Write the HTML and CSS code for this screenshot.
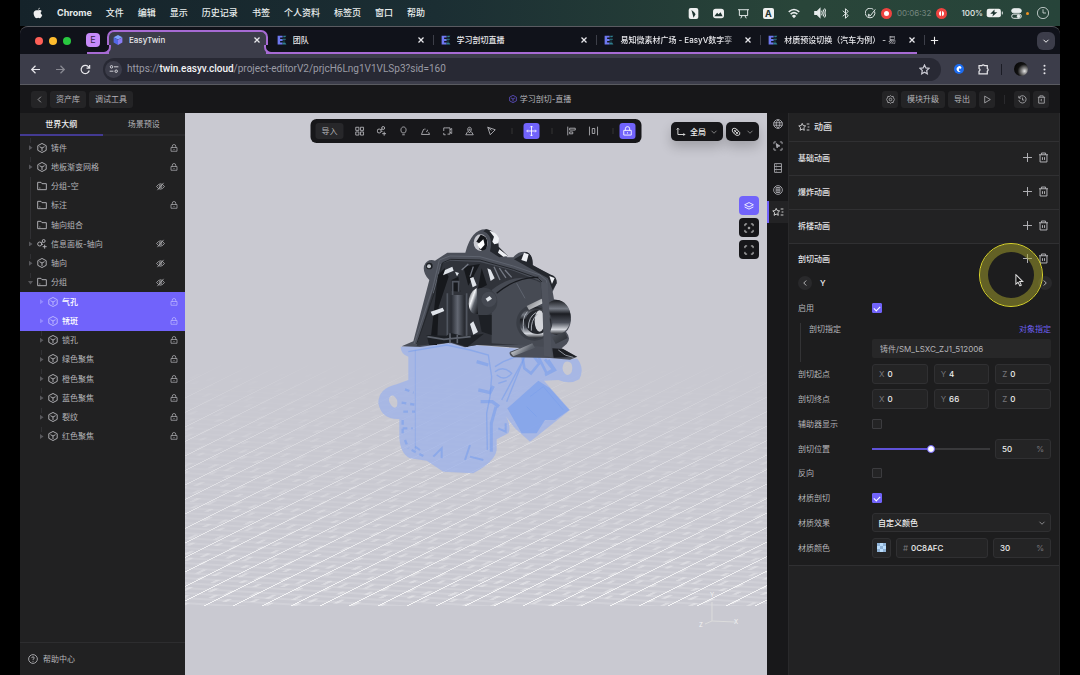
FILE: index.html
```html
<!DOCTYPE html>
<html lang="zh-CN">
<head>
<meta charset="utf-8">
<title>EasyTwin</title>
<link rel="stylesheet" href="styles.css">
</head>
<body>
<svg class="sprite" aria-hidden="true">
  <symbol id="cube" viewBox="0.5 0.5 15 15"><path d="M8 1.200 14.300 4.500v7L8 14.800 1.700 11.500v-7zM4.200 6 8 8l3.800-2M8 8v4.500"/></symbol>
  <symbol id="folder" viewBox="0.5 0.5 15 15"><path d="M1.500 2.500h5l1.500 2h6.500v9h-13zM4 11h1.500"/></symbol>
  <symbol id="nodes" viewBox="0.5 0.5 15 15"><circle cx="4.500" cy="8" r="3"/><circle cx="10.500" cy="3.500" r="2.200"/><path d="M7.500 8.500h2M12 9v6M9 12h6M7 6l2-1"/></symbol>
  <symbol id="lock" viewBox="0 0 16 16"><path d="M2 7h12v7.500H2zM4.500 7V4.500a3.500 3.500 0 0 1 7 0V7M8 10v2"/></symbol>
  <symbol id="eye-off" viewBox="0 0 16 16"><path d="M1 8q7-9.500 14 0-7 9.500-14 0zM13.500 1.500l-11 13"/><circle cx="8" cy="8" r="2.300"/></symbol>
  <symbol id="plus" viewBox="0 0 16 16"><path d="M8 1.500v13M1.500 8h13"/></symbol>
  <symbol id="close" viewBox="0 0 16 16"><path d="m3 3 10 10M13 3 3 13"/></symbol>
  <symbol id="trash" viewBox="0 0 16 16"><path d="M1.500 4h13M5 4V1.500h6V4M3 4v10.500h10V4M6.500 7.500v4M9.500 7.500v4"/></symbol>
  <symbol id="left" viewBox="0 0 16 16"><path d="M10.500 3 5.500 8l5 5"/></symbol>
  <symbol id="right" viewBox="0 0 16 16"><path d="m5.500 3 5 5-5 5"/></symbol>
  <symbol id="down" viewBox="0 0 16 16"><path d="m3 5.500 5 5 5-5"/></symbol>
  <symbol id="arrow" viewBox="0 0 16 16"><path d="M14.500 8h-12M8 2.500 2.500 8 8 13.500"/></symbol>
  <symbol id="star" viewBox="0 0 16 16"><path d="m8 1.500 2 4.300 4.500.5-3.300 3.200.9 4.800L8 12l-4.100 2.300.9-4.800L1.500 6.300 6 5.800z"/></symbol>
  <symbol id="anim" viewBox="0 0 20 16"><path d="m7 2 1.700 3.700 4 .5-3 2.900.8 4.400L7 11.500l-3.500 2 .8-4.400-3-2.900 4-.5zM14.500 3H19M16 8h3M14.500 13H19"/></symbol>
  <symbol id="gear" viewBox="0 0 16 16"><path d="M8 1l2 1.800 2.800-.3.500 2.800L15.500 8l-2.200 2.700-.5 2.800-2.800-.3L8 15l-2-1.800-2.800.3-.5-2.800L.5 8l2.200-2.700.5-2.800 2.800.3z"/><circle cx="8" cy="8" r="2.300"/></symbol>
  <symbol id="frame" viewBox="0 0 16 16"><path d="M1.500 5V1.500H5M11 1.500h3.500V5M14.500 11v3.500H11M5 14.500H1.500V11"/></symbol>
  <symbol id="ev" viewBox="0 0 16 16"><path class="ev-a" d="M1 1h8v3H5v2.500h4v3H5V12h4v3H1z"/><path class="ev-b" d="M10 1h5l-2 2.500h-3zM9 6h5v1.500H9zM9 9h4v1H9zM9 12h4l2 3H9z"/></symbol>
</svg>

<div class="screen">
  <nav class="menubar">
    <svg class="apple" viewBox="0 0 16 18"><path d="M11 0q.2 2.500-2.700 4Q8.200 1.300 11 0zM8 4.700c1.300 0 3.800-1.700 6 .9-2.600 1.900-2 5.400.8 6.500-1.800 4.500-3.600 6-6.400 4.600-3 1.300-4.800.4-6.400-3C-.5 8.500 1.500 3.200 8 4.700z"/></svg>
    <b>Chrome</b><span>文件</span><span>编辑</span><span>显示</span><span>历史记录</span><span>书签</span><span>个人资料</span><span>标签页</span><span>窗口</span><span>帮助</span>
    <div class="status">
      <svg class="mi solid" viewBox="0 0 16 16"><rect x="1" y="0" width="14" height="16" rx="3"/><path class="cut" d="M5 3l4 3 2 3-3 5-1-4z"/></svg>
      <svg class="mi solid" viewBox="0 0 16 16"><rect x="0" y="1" width="16" height="14" rx="4"/><path class="cut" d="m2 12 4-5 2 2 3-3 3 6z"/></svg>
      <svg class="mi" viewBox="0 0 16 16"><path d="M0 2.500h16M2 2.500v8.500h12V2.500M6 11l-2 4M10 11l2 4"/></svg>
      <span class="ime">A</span>
      <svg class="mi wide" viewBox="0 0 16 16"><path class="wifi" d="M1 6.500q7-6.500 14 0M3.500 9.500q4.500-4 9 0M6.500 12q1.500-1.500 3 0l-1.500 1.500z"/></svg>
      <svg class="mi wide" viewBox="0 0 16 16"><path class="fill" d="M1 6h3l4-4v12l-4-4H1z"/><path d="M10 5q2 3 0 6M12 3.500q3 4.500 0 9M14 2q4 6 0 12"/></svg>
      <svg class="mi" viewBox="0 0 16 16"><path d="m4 4 8 7-4 4V1l4 4-8 7"/></svg>
      <div class="rec">
        <svg class="mi" viewBox="0 0 16 16"><path d="M12 2a7 7 0 1 0 2 3M5 9l3 2 7-9M5 9l0 3 3-1"/></svg>
        <i class="dot stop"></i><span>00:06:32</span><i class="dot pause"></i>
      </div>
      <div class="battery"><span>100%</span><svg viewBox="0 0 24 14"><rect x="1" y="1" width="20" height="12" rx="3"/><path class="cut" d="m12 2-6 6h4l-1 4 7-6h-4z"/><path d="M23 5v4"/></svg></div>
      <div class="cc"><svg class="mi" viewBox="0 0 16 16"><rect class="fill" x="1" y="1" width="14" height="6" rx="3"/><rect x="1" y="9" width="14" height="6" rx="3"/><circle class="fill" cx="11" cy="12" r="2"/></svg><i></i></div>
      <svg class="mi clock" viewBox="0 0 16 16"><circle cx="8" cy="8" r="7.500"/><path d="M8 3v5h4"/></svg>
    </div>
  </nav>

  <div class="browser">
    <div class="tabstrip">
      <div class="lights"><i></i><i></i><i></i></div>
      <div class="group">
        <span class="badge">E</span>
        <div class="tab active"><svg class="fav" viewBox="0 0 16 16"><path fill="#7da2ff" d="M8 0l7 3.500-7 3.500-7-3.500z"/><path fill="#5267e8" d="m1 4 7 3.500V16l-7-4z"/><path fill="#8b7df5" d="m15 4-7 3.500V16l7-4z"/></svg><span>EasyTwin</span><button aria-label="关闭"><svg><use href="#close"/></svg></button></div>
        <div class="tab"><svg class="fav"><use href="#ev"/></svg><span>团队</span><button aria-label="关闭"><svg><use href="#close"/></svg></button></div>
        <div class="tab"><svg class="fav"><use href="#ev"/></svg><span>学习剖切直播</span><button aria-label="关闭"><svg><use href="#close"/></svg></button></div>
        <div class="tab"><svg class="fav"><use href="#ev"/></svg><span class="fade">易知微素材广场 - EasyV数字孪</span><button aria-label="关闭"><svg><use href="#close"/></svg></button></div>
        <div class="tab"><svg class="fav"><use href="#ev"/></svg><span class="fade">材质预设切换（汽车为例） - 易</span><button aria-label="关闭"><svg><use href="#close"/></svg></button></div>
      </div>
      <button class="newtab" aria-label="新标签页"><svg><use href="#plus"/></svg></button>
      <button class="tablist" aria-label="搜索标签页"><svg><use href="#down"/></svg></button>
    </div>
    <div class="urlbar">
      <button aria-label="后退"><svg><use href="#arrow"/></svg></button>
      <button class="dim flip" aria-label="前进"><svg><use href="#arrow"/></svg></button>
      <button aria-label="刷新"><svg viewBox="0 0 16 16"><path d="M13.500 9.500a6 6 0 1 1-1.500-5.700L14 6M14 1.500V6H9.500"/></svg></button>
      <div class="omnibox">
        <span class="site"><svg viewBox="0 0 16 16"><circle cx="4" cy="4.500" r="2"/><path d="M8 4.500h7M1 11.500h6"/><circle cx="11.500" cy="11.500" r="2"/></svg></span>
        <a href="#">https://<b>twin.easyv.cloud</b>/project-editorV2/prjcH6Lng1V1VLSp3?sid=160</a>
        <button aria-label="收藏"><svg><use href="#star"/></svg></button>
      </div>
      <svg class="ext" viewBox="0 0 16 16"><circle cx="8" cy="8" r="8" fill="#1c6cf0" stroke="none"/><path d="M12 5a4.500 4.500 0 1 0-1 7c-3 0-4-2-3-4s2-1 3 0" fill="#fff" stroke="none"/></svg>
      <button aria-label="扩展"><svg viewBox="0 0 16 16"><path d="M1.500 2.500h4q2-2.500 4 0h4v4q2.500 1.500 0 4v4h-12v-4q3-2 0-4z"/></svg></button>
      <i class="bar"></i><span class="avatar"></span>
      <button class="dots" aria-label="菜单"><svg viewBox="0 0 16 16"><circle cx="8" cy="2.500" r="1.500"/><circle cx="8" cy="8" r="1.500"/><circle cx="8" cy="13.500" r="1.500"/></svg></button>
    </div>
  </div>

  <header class="appbar">
    <div class="side"><button class="sq" aria-label="返回"><svg><use href="#left"/></svg></button><button>资产库</button><button>调试工具</button></div>
    <h1><svg><use href="#cube"/></svg>学习剖切-直播</h1>
    <div class="side end">
      <button class="sq" aria-label="设置"><svg><use href="#gear"/></svg></button><button>模块升级</button><button>导出</button>
      <button class="sq" aria-label="预览"><svg viewBox="0 0 16 16"><path d="M3 2v12l10-6z"/></svg></button><i></i>
      <button class="sq" aria-label="历史"><svg viewBox="0 0 16 16"><path d="M2 5a6.500 6.500 0 1 1-.500 4M1.500 1.500V5.500h4M8 4.500V9h3"/></svg></button>
      <button class="sq" aria-label="回收站"><svg viewBox="0 0 16 16"><path d="M1.500 4h13M5 4V1.500h6V4M3 4v10.500h10V4M9 7 6.500 9 9 11"/></svg></button>
    </div>
  </header>

  <main class="work">
    <aside class="outline">
      <div class="tabs"><button class="on">世界大纲</button><button>场景预设</button></div>
      <ul class="tree">
        <li><i class="caret"></i><svg><use href="#cube"/></svg><span>铸件</span><svg class="st"><use href="#lock"/></svg></li>
        <li><i class="caret"></i><svg><use href="#cube"/></svg><span>地板渐变网格</span><svg class="st"><use href="#lock"/></svg></li>
        <li class="leaf"><i></i><svg><use href="#folder"/></svg><span>分组-空</span><svg class="st eye"><use href="#eye-off"/></svg></li>
        <li class="leaf"><i></i><svg><use href="#folder"/></svg><span>标注</span><svg class="st"><use href="#lock"/></svg></li>
        <li class="leaf"><i></i><svg><use href="#folder"/></svg><span>轴向组合</span></li>
        <li><i class="caret"></i><svg><use href="#nodes"/></svg><span>信息面板-轴向</span><svg class="st eye"><use href="#eye-off"/></svg></li>
        <li><i class="caret"></i><svg><use href="#cube"/></svg><span>轴向</span><svg class="st eye"><use href="#eye-off"/></svg></li>
        <li class="open"><i class="caret"></i><svg><use href="#folder"/></svg><span>分组</span><svg class="st eye"><use href="#eye-off"/></svg></li>
        <li class="child sel"><i class="caret"></i><svg><use href="#cube"/></svg><span>气孔</span><svg class="st"><use href="#lock"/></svg></li>
        <li class="child sel"><i class="caret"></i><svg><use href="#cube"/></svg><span>锈斑</span><svg class="st"><use href="#lock"/></svg></li>
        <li class="child"><i class="caret"></i><svg><use href="#cube"/></svg><span>锁孔</span><svg class="st"><use href="#lock"/></svg></li>
        <li class="child"><i class="caret"></i><svg><use href="#cube"/></svg><span>绿色聚焦</span><svg class="st"><use href="#lock"/></svg></li>
        <li class="child"><i class="caret"></i><svg><use href="#cube"/></svg><span>橙色聚焦</span><svg class="st"><use href="#lock"/></svg></li>
        <li class="child"><i class="caret"></i><svg><use href="#cube"/></svg><span>蓝色聚焦</span><svg class="st"><use href="#lock"/></svg></li>
        <li class="child"><i class="caret"></i><svg><use href="#cube"/></svg><span>裂纹</span><svg class="st"><use href="#lock"/></svg></li>
        <li class="child"><i class="caret"></i><svg><use href="#cube"/></svg><span>红色聚焦</span><svg class="st"><use href="#lock"/></svg></li>
      </ul>
      <a class="help" href="#"><svg viewBox="0 0 16 16"><circle cx="8" cy="8" r="7"/><path d="M6 6.500q0-2 2-2t2 2q0 1-2 2v1M8 11v1.500"/></svg>帮助中心</a>
    </aside>

    <section class="viewport">
      <svg class="scene" viewBox="185 113 582 562" preserveAspectRatio="xMidYMid slice">
        <defs>
          <linearGradient id="fadeg" x1="0" y1="0" x2="0" y2="1"><stop offset="0" stop-color="#000"/><stop offset=".35" stop-color="#555"/><stop offset="1" stop-color="#eee"/></linearGradient>
          <mask id="fade"><rect x="185" y="360" width="582" height="246" fill="url(#fadeg)"/></mask>
          <pattern id="diag" width="29" height="40" patternUnits="userSpaceOnUse" patternTransform="matrix(1 0 -2 1 10 0)"><path d="M14 0V40" stroke="#fff" stroke-width="2" opacity=".85"/></pattern>
          <pattern id="flat" width="60" height="5" patternUnits="userSpaceOnUse" patternTransform="matrix(1 .06 0 1 0 0)"><path d="M0 2H60" stroke="#fff" stroke-width="1" opacity=".34"/></pattern>
          <pattern id="dash" width="42" height="15" patternUnits="userSpaceOnUse" patternTransform="matrix(1 .09 -2 1 0 0)"><path d="M5 2v4M16 8v3M23 3v4M34 10v3" stroke="#fff" stroke-width="4" opacity=".36"/></pattern>
          <linearGradient id="metal" x1="0" y1="0" x2="1" y2="1"><stop offset="0" stop-color="#24272d"/><stop offset=".4" stop-color="#f4f6f9"/><stop offset=".6" stop-color="#5b6069"/><stop offset="1" stop-color="#111317"/></linearGradient>
          <linearGradient id="barrel" x1="0" y1="0" x2="0" y2="1"><stop offset="0" stop-color="#1a1c21"/><stop offset=".25" stop-color="#757a84"/><stop offset=".4" stop-color="#1c1e23"/><stop offset=".65" stop-color="#4b4f59"/><stop offset=".85" stop-color="#d5d8de"/><stop offset="1" stop-color="#1c1e23"/></linearGradient>
          <linearGradient id="tube" x1="0" y1="0" x2="1" y2="0"><stop offset="0" stop-color="#24272e"/><stop offset=".5" stop-color="#636873"/><stop offset="1" stop-color="#25282e"/></linearGradient>
        </defs>
        <g mask="url(#fade)">
          <rect x="185" y="360" width="582" height="246" fill="url(#flat)"/>
          <rect x="185" y="360" width="582" height="246" fill="url(#dash)"/>
          <rect x="185" y="360" width="582" height="246" fill="url(#diag)"/>
        </g>
        <g transform="translate(370 220) scale(.3333)">
          <path fill="#9fb3e8" fill-opacity=".8" fill-rule="evenodd" d="M92 380 240 368 320 376 450 386 540 414 622 416Q645 445 628 478 600 495 565 480L522 482 600 570 480 665 435 625 408 590Q425 620 415 640L380 658V690Q375 725 310 760L220 755 170 722 120 715Q90 700 88 650V597Q35 600 25 550 25 505 80 493L115 480V410Q92 402 92 380zM60 530q-8 10 3 25 12 15 18 3 4-18-6-27-8-8-15-1zM583 428q-12 18 2 33 12 10 20-5 6-24-7-30-8-4-15 2z"/>
          <path fill="#7ba0ec" fill-opacity=".7" d="M412 565 505 482 540 505 598 570 555 600 525 600 500 640 455 640z"/>
          <g fill="none" stroke="#6f9aed" stroke-opacity=".5" stroke-width="4">
            <path d="M136 390V690" stroke-width="2"/>
            <path d="M105 508l26 10M95 548l38 6M100 575h35M98 600v50M98 625h30M105 660l10 25M125 690l35 18" stroke-width="7" stroke-dasharray="14 12"/>
            <path d="M115 395 230 375 300 390 355 405 365 470 360 530 350 580 352 690"/>
            <path d="M378 560l-14 50v85" stroke-width="9"/>
            <path d="M320 425l35 10M325 510l35 8 10-20M332 545h35l20 15" stroke-width="10"/>
            <path d="M375 440 400 425 450 405M375 455q25-20 50 5-20 25-45 5M385 490l25-8M395 540l70-130M410 545l50-125"/>
            <path d="M455 395l8 50 20 15 25-30-20-25M500 400l30 60 20-12-25-30M535 420l20 30-30 15" stroke-width="8"/>
            <path d="M190 710l25-25v30M285 720l15-45M300 710l40 10M385 625l22 10v-25M150 690l-15-10" stroke-width="6"/>
            <path d="M470 560 500 590M480 530l40-30 60 70" stroke-width="2"/>
          </g>
          <path fill="#4b4f59" d="M95 379 130 364 178 180Q158 160 162 138 172 115 195 122L232 98 286 98Q305 25 350 28 386 40 385 85L412 112 430 112Q445 92 470 96 488 105 488 135L540 165Q560 168 560 190L548 215 552 238Q602 245 603 300 600 325 588 335 605 355 590 372L575 385 622 410 600 419 540 414 430 412Q415 405 420 395L450 384 320 375 285 382 240 368 150 381z"/>
          <path fill="#24272d" d="M348 28q36 4 38 52l28 28-26 4-28-18q12-48-20-60zM470 96q20 8 18 40l55 28q18 4 17 26l-12 20-14-35-62-35-40-22z"/>
          <path fill="#eef0f4" d="m358 32 14 18-5 15 6 8 12-3 2-15q-8-20-29-23zM388 88l26 20-14 2-16-12zM462 98l14 5-6 22-16-5zM538 168l16 6-8 18z"/>
          <ellipse cx="332" cy="68" rx="21" ry="25" fill="#c9cad1"/><path d="M332 44q20 3 20 25t-15 23l-10-5 12-12-20-10z" fill="#121418"/><path d="m322 74 18-16 4 16-12 14z" fill="#fff"/>
          <path fill="#30333a" d="M212 132 240 122 330 126 430 152 512 184 522 375 320 375 285 380 240 366 140 378z"/>
          <path fill="#464a53" d="M365 210Q440 150 512 188L520 300 522 380 365 370z"/>
          <path fill="none" stroke="#5e636e" stroke-width="3" d="M132 372 188 205 208 120 240 108 330 110 430 138 510 165 530 182 542 410M212 132 190 220M440 190l25 45"/>
          <path fill="none" stroke="#23262b" stroke-width="3" d="M140 372 198 205 218 128 242 118 330 120 430 148 505 175 520 190 530 390"/>
          <path fill="#16181c" d="m180 375 24-210 20-20 12 25-30 90-5 115zM245 180l20-10 6 45-26-2zM280 140l50-8-35 65zM335 145l16 50-28 15z"/>
          <path fill="#dfe3e9" d="m225 150 22-10 4 12-32 14zM300 175l10-4 10 25-12 6zM352 145l10 4 12 26-12 8zM300 312l10-8 14 32-14 8zM182 275l36-12 5 10-35 14zM255 155l12 4-6 10z"/>
          <g stroke="#747984" stroke-width="4"><path d="m372 140 18 40M388 144l20 30M405 150l20 22M275 150l20-18M310 140l-10 30"/></g>
          <path fill="url(#tube)" d="M242 225h42v130h-42z"/><path d="M232 220v140M290 220v130M248 225v-40h18v30" fill="none" stroke="#50555f" stroke-width="5"/>
          <ellipse cx="340" cy="245" rx="42" ry="42" fill="#3b3f47"/><path d="M320 204q-26 15-24 48t28 30z" fill="url(#metal)"/><circle cx="357" cy="238" r="23" fill="#454952"/><path d="m347 236 12-8 7 8-13 9z" fill="#dfe3e8"/><path d="M380 220Q440 170 505 172" stroke="#17191e" stroke-width="4" fill="none"/>
          <path d="M325 285h40v60l-30-10zM170 345l60 2 12-8 40 10 60-8-50 40-45-14-70 8z" fill="#1d2025"/><path d="m172 350 50 8 80-8M240 340v30M262 345v25" stroke="#5c616b" stroke-width="5" fill="none"/>
          <ellipse cx="560" cy="292" rx="42" ry="52" fill="url(#barrel)"/><circle cx="493" cy="308" r="54" fill="#393d45"/><circle cx="496" cy="308" r="47" fill="url(#barrel)"/><circle cx="502" cy="306" r="36" fill="#24272d"/><ellipse cx="509" cy="303" rx="15" ry="32" fill="#d3d5da"/><path d="M475 325q0-35 24-48M484 332q-2-30 18-50M462 335q-8-40 10-60" stroke="#a8adb5" stroke-width="3" fill="none"/>
          <path d="m470 258 45-22 4 14-42 20zM545 350l40-14 8 18-36 18zM422 398l65-28 8 13-65 26z" fill="url(#metal)"/>
          <path d="m515 185 18 4 13 222-24-4z" fill="#50545e"/><path d="m547 385 32 2 42 24-70 2z" fill="#1d1f24"/><path d="M565 390q20 20 45 22" stroke="#8f949c" stroke-width="3" fill="none"/>
          <circle cx="178" cy="138" r="10" fill="#1d2025"/><circle cx="177" cy="139" r="6" fill="#c6cad1"/>
        </g>
        <g class="axis"><path d="M712 602v19l23 1M712 621l-7 3"/><text x="710" y="597">Y</text><text x="734" y="624">X</text><text x="699" y="627">Z</text></g>
      </svg>

      <div class="tools">
        <button class="import">导入</button>
        <button aria-label="组件"><svg viewBox="0 0 16 16"><path d="M2 2h5v5H2zM9.500 2h5v5h-5zM2 9.500h5v5H2zM9.500 9.500h5v5h-5z"/></svg></button>
        <button aria-label="节点"><svg><use href="#nodes"/></svg></button>
        <button aria-label="灯光"><svg viewBox="0 0 16 16"><path d="M6 11C2.500 8 3.500 1.500 8 1.500S13.500 8 10 11zM6 14h4"/></svg></button>
        <button aria-label="地形"><svg viewBox="0 0 16 16"><path d="m5 5-3.500 8.500h13L13 10M6 5h2M9 9h2M11 6v2"/></svg></button>
        <button aria-label="相机"><svg viewBox="0 0 16 16"><path d="M5 3h7v10H8M12 6l3-2v8l-3-2M2 8V3h3M2 11v3h3"/></svg></button>
        <button aria-label="位置"><svg viewBox="0 0 16 16"><path d="M5 9 2 14h12l-3-5"/><path d="M8 11C4 7 4.500 2 8 2s4 5 0 9z"/><circle cx="8" cy="6" r="1"/></svg></button>
        <button aria-label="绘制"><svg viewBox="0 0 16 16"><path d="m2 2 12 4-8 8zM2 2l6 5"/></svg></button>
        <i></i>
        <button class="on" aria-label="移动"><svg viewBox="0 0 16 16"><path d="M8 0v16M0 8h16M6 2l2-2 2 2M6 14l2 2 2-2M2 6 0 8l2 2M14 6l2 2-2 2"/></svg></button>
        <i></i>
        <button aria-label="左对齐"><svg viewBox="0 0 16 16"><path d="M2 1v14M5 3.500h9v3H5zM5 9.500h5v3H5z"/></svg></button>
        <button aria-label="分布"><svg viewBox="0 0 16 16"><path d="M1.500 1v14M14.500 1v14M6 4h4v8H6z"/></svg></button>
        <i class="short"></i>
        <button class="on" aria-label="锁定"><svg><use href="#lock"/></svg></button>
      </div>
      <div class="modes">
        <button><svg viewBox="0 0 16 16"><path d="M3 2v10h11M1 4l2-2 2 2M12 10l2 2-2 2"/></svg>全局<svg><use href="#down"/></svg></button>
        <button aria-label="吸附"><svg viewBox="0 0 16 16"><path d="M3 8.500 2 5q0-3 3-3l3.500 1L14 9q1 4-3 4.500L8 13zM5 5l6 6M9 4 5 9M12 7l-4 4"/></svg><svg><use href="#down"/></svg></button>
      </div>
      <div class="stack">
        <button class="on" aria-label="图层"><svg viewBox="0 0 16 16"><path d="m8 2.500 7 3.500-7 3.500L1 6zM1 9.500 8 13l7-3.500"/></svg></button>
        <button aria-label="聚焦"><svg viewBox="0 0 16 16"><use href="#frame"/><path d="M8 6v4M6 8h4"/></svg></button>
        <button aria-label="全屏"><svg><use href="#frame"/></svg></button>
      </div>
    </section>

    <nav class="rail">
      <button aria-label="世界"><svg viewBox="0 0 16 16"><circle cx="8" cy="8" r="7"/><path d="M1 6h14M1 10h14M8 1Q2 8 8 15M8 1q6 7 0 14"/></svg></button>
      <button aria-label="选择"><svg viewBox="0 0 16 16"><use href="#frame"/><path class="fill" d="m5 4 6 4-3 .5L6.500 11z"/></svg></button>
      <button aria-label="数据"><svg viewBox="0 0 16 16"><path d="M2.500 1h11v14h-11zM2.500 5.500h11M2.500 10.500h11M5 3.200h1M5 8h1M5 13h1"/></svg></button>
      <button aria-label="材质"><svg viewBox="0 0 16 16"><circle cx="8" cy="8" r="7"/><path d="M5 4h6v8H5zM5 8h6M8 4v8"/></svg></button>
      <button class="on" aria-label="动画"><svg><use href="#anim"/></svg></button>
    </nav>

    <aside class="props">
      <h2><svg><use href="#anim"/></svg>动画</h2>
      <div class="sec"><h3>基础动画</h3><button aria-label="添加"><svg><use href="#plus"/></svg></button><button aria-label="删除"><svg><use href="#trash"/></svg></button></div>
      <div class="sec"><h3>爆炸动画</h3><button aria-label="添加"><svg><use href="#plus"/></svg></button><button aria-label="删除"><svg><use href="#trash"/></svg></button></div>
      <div class="sec"><h3>拆楼动画</h3><button aria-label="添加"><svg><use href="#plus"/></svg></button><button aria-label="删除"><svg><use href="#trash"/></svg></button></div>
      <div class="open-sec">
        <div class="sec"><h3>剖切动画</h3><button aria-label="添加"><svg><use href="#plus"/></svg></button><button aria-label="删除"><svg><use href="#trash"/></svg></button></div>
        <div class="pager"><button aria-label="上一个"><svg><use href="#left"/></svg></button><span>Y</span><button aria-label="下一个"><svg><use href="#right"/></svg></button></div>
        <div class="row"><label for="en">启用</label><input type="checkbox" id="en" checked></div>
        <div class="target">
          <div class="trow"><label for="tg">剖切指定</label><button>对象指定</button></div>
          <input id="tg" type="text" readonly value="铸件/SM_LSXC_ZJ1_512006">
        </div>
        <div class="rows">
          <div class="row"><span>剖切起点</span><div class="xyz"><label class="f">X<input value="0"></label><label class="f">Y<input value="4"></label><label class="f">Z<input value="0"></label></div></div>
          <div class="row"><span>剖切终点</span><div class="xyz"><label class="f">X<input value="0"></label><label class="f">Y<input value="66"></label><label class="f">Z<input value="0"></label></div></div>
          <div class="row"><label for="hp">辅助器显示</label><input type="checkbox" id="hp"></div>
          <div class="row"><label for="ps">剖切位置</label><div class="slide"><input id="ps" type="range" value="50" style="--v:50%"><label class="f pct"><input value="50" aria-label="剖切位置数值">%</label></div></div>
          <div class="row"><label for="rv">反向</label><input type="checkbox" id="rv"></div>
          <div class="row"><label for="mc">材质剖切</label><input type="checkbox" id="mc" checked></div>
          <div class="row"><label for="me">材质效果</label><div class="pick"><select id="me"><option>自定义颜色</option></select><svg><use href="#down"/></svg></div></div>
          <div class="row"><span>材质颜色</span><div class="color"><button class="f swatch" aria-label="颜色"><i></i></button><label class="f">#<input value="0C8AFC"></label><label class="f pct"><input value="30" aria-label="不透明度">%</label></div></div>
        </div>
      </div>
      <div class="pointer"><svg viewBox="0 0 12 18"><path d="M1 1v13l3-2.500 2.500 5 2-1-2.300-5H10.500z"/></svg></div>
    </aside>
  </main>
</div>
</body>
</html>
```

FILE: styles.css
```css
:root { --accent: #7163fb; --line: #303032; --field: #272728; --text: #b5b5b9; }
* { box-sizing: border-box; }
body { margin: 0; background: #000; color: var(--text); font: 8px/12px Inter, "Noto Sans CJK SC", sans-serif; }
button, input, select { font: inherit; color: inherit; background: none; border: 0; padding: 0; margin: 0; min-width: 0; }
button { display: inline-flex; align-items: center; justify-content: center; white-space: nowrap; }
svg { width: 10px; height: 10px; flex: none; fill: none; stroke: currentColor; stroke-width: 1.4; }
a { color: inherit; text-decoration: none; }
h1, h2, h3, ul { margin: 0; padding: 0; font-size: inherit; }
i { flex: none; }
.fill { fill: currentColor; }
.sprite { position: absolute; width: 0; height: 0; }
.screen { min-height: 100vh; margin: 0 20px; display: flex; flex-direction: column; }

.menubar { height: 26px; display: flex; align-items: center; gap: 14px; padding: 0 11px 0 13px; font-size: 9px; font-weight: 500; color: #e7ecec; white-space: nowrap; background: linear-gradient(90deg, #15232a, #1b2e33 40%, #294539 75%, #27443a); }
.apple { width: 10px; height: 12px; fill: #eee; stroke: none; }
.status { margin-left: auto; display: flex; align-items: center; gap: 14px; }
.mi { width: 11px; height: 11px; }
.mi.wide { width: 12px; height: 12px; }
.wifi { stroke-width: 2; }
.solid, .battery rect { fill: #eef0f0; stroke: none; }
.cut { fill: #1d332f; stroke: none; }
.ime { width: 11px; height: 11px; border-radius: 2px; background: #eef0f0; color: #24352f; font-weight: 700; line-height: 11px; text-align: center; }
.rec { display: flex; align-items: center; gap: 5px; color: #74857e; font-size: 8px; font-weight: 400; }
.rec .mi { color: #e7ecec; }
.dot { width: 11px; height: 11px; border-radius: 50%; border: 3px solid #ef4340; background: #fff; }
.pause { background: linear-gradient(90deg, #fff 40%, #ef4340 40% 60%, #fff 60%); }
.battery { display: flex; align-items: center; gap: 3px; font-size: 8px; }
.battery svg { width: 17px; height: 10px; }
.cc { display: flex; align-items: center; gap: 4px; margin-left: -6px; }
.cc i { width: 3px; height: 3px; border-radius: 50%; background: #f29422; }
.clock { width: 12px; height: 12px; margin-left: -6px; stroke-width: 1; }

.browser { border: solid #5a5b61; border-width: 1px 0; border-radius: 8px 8px 0 0; background: #3c3d4a; overflow: hidden; }
.tabstrip { height: 27px; display: flex; align-items: center; background: #10121a; padding: 0 5px 0 15px; }
.lights { display: flex; gap: 6px; }
.lights i { width: 8px; height: 8px; border-radius: 50%; background: #fe5f57; }
.lights i:nth-child(2) { background: #febc2e; }
.lights i:nth-child(3) { background: #28c840; }
.group { flex: 0 1 836px; min-width: 0; align-self: stretch; margin-left: 16px; display: flex; gap: 4px; padding-top: 3px; background: linear-gradient(#a76bd4, #a76bd4) no-repeat 0 100% / calc(100% - 6px) 2px; }
.badge { flex: none; width: 14px; height: 14px; margin: 3px 3px 0 -1px; border-radius: 4px; background: #c78bfa; color: #35264a; font-size: 9px; line-height: 14px; text-align: center; }
.tab { position: relative; flex: 1 1 0; min-width: 0; display: flex; align-items: center; gap: 6px; padding: 0 7px 4px 5px; color: #e8e8ec; font-weight: 500; }
.tab span { flex: 1; min-width: 0; overflow: hidden; white-space: nowrap; }
.tab button svg { width: 8px; height: 8px; stroke-width: 2.5; }
.tab .fav { width: 10px; height: 10px; stroke: none; }
.fade { -webkit-mask: linear-gradient(90deg, #000 85%, #0003); mask: linear-gradient(90deg, #000 85%, #0003); }
.ev-a { fill: #6e78f0; }
.ev-b { fill: #2f7f8f; }
.tab:not(.active)::after { content: ""; position: absolute; right: -2px; top: 5px; width: 1px; height: 10px; background: #3d3f49; }
.tab.active { border: 2px solid #a76bd4; border-bottom: 0; border-radius: 7px 7px 0 0; background: #3c3d4a; padding: 0 5px 6px 4px; }
.tab.active::before, .tab.active::after { content: ""; position: absolute; bottom: 0; width: 7px; height: 7px; border-bottom: 2px solid #a76bd4; background: #10121a; }
.tab.active::before { left: -7px; border-right: 2px solid #a76bd4; border-radius: 0 0 7px 0; }
.tab.active::after { right: -7px; border-left: 2px solid #a76bd4; border-radius: 0 0 0 7px; }
.newtab { color: #eee; margin-left: 7px; }
.newtab svg { width: 9px; height: 9px; stroke-width: 2; }
.tablist { width: 18px; height: 18px; margin-left: auto; border-radius: 6px; background: #3c3d4a; color: #eee; }
.tablist svg { width: 8px; height: 8px; stroke-width: 2; }
.urlbar { height: 30px; display: flex; align-items: center; gap: 14px; padding: 0 10px; color: #e6e6ea; }
.urlbar button svg { width: 11px; height: 11px; stroke-width: 1.8; }
.dim { opacity: .45; }
.flip { transform: scaleX(-1); }
.omnibox { flex: 1; min-width: 0; height: 23px; display: flex; align-items: center; gap: 5px; margin: 0 -1px 0 -2px; padding: 0 11px 0 2px; border-radius: 12px; background: #282934; font: 10px/12px Roboto, sans-serif; color: #9a9ba5; }
.omnibox a { flex: 1; overflow: hidden; white-space: nowrap; }
.omnibox b { font-weight: 500; color: #f2f2f5; }
.omnibox button { color: #c9c9d2; }
.site { flex: none; width: 17px; height: 17px; display: grid; place-items: center; border-radius: 50%; background: #3c3d4a; color: #e6e6ea; }
.bar { width: 1px; height: 11px; background: #1b1c25; margin: 0 -2px; }
.avatar { flex: none; width: 14px; height: 14px; border-radius: 50%; background: radial-gradient(circle at 75% 65%, #e8e8e8, #888 20%, #111 50%, #000); }
.dots { margin-left: -3px; }
.dots svg { fill: currentColor; stroke: none; }

.appbar { height: 28px; display: flex; align-items: center; padding: 0 11px; background: #171719; }
.side { flex: 1; display: flex; align-items: center; gap: 3px; }
.end { justify-content: flex-end; }
.side button { height: 17px; padding: 0 6px; border-radius: 3px; background: #242426; }
.side .sq { width: 16px; padding: 0; }
.side i { width: 1px; height: 9px; margin: 0 6px; background: #2a2a2d; }
.side svg { width: 9px; height: 9px; }
.appbar h1 { display: flex; align-items: center; gap: 3px; font-weight: 400; }
.appbar h1 svg { width: 8px; height: 8px; color: #6656d8; }

.work { flex: 1; display: flex; min-height: 0; }
.outline { flex: none; width: 165px; display: flex; flex-direction: column; background: #212122; }
.tabs { height: 23px; display: flex; }
.tabs button { flex: 1; border-bottom: 2px solid #29292b; }
.tabs .on { color: #eee; font-weight: 500; border-color: #433a92; }
.tree { list-style: none; height: 310px; padding-top: 2px; display: grid; grid-auto-rows: 1fr; }
.tree li { display: flex; align-items: center; gap: 4px; padding: 0 7px 0 8px; background: linear-gradient(#303033, #303033) no-repeat 10px 0 / 1px 5px; }
.tree .leaf { background-size: 1px 100%; }
.tree .child { padding-left: 19px; background-position: 21px 0; }
.tree i { width: 5px; height: 5px; }
.caret { background: #58585c; clip-path: polygon(20% 0, 90% 50%, 20% 100%); }
.open .caret { transform: rotate(90deg); }
.tree span { flex: 1; white-space: nowrap; }
.tree .st { width: 8px; height: 8px; }
.tree .eye { width: 9px; height: 9px; margin-right: 13px; }
.tree .sel { background: var(--accent); color: #c0baff; }
.sel .caret { background: #938aff; }
.sel span { color: #fff; font-weight: 500; }
.help { height: 33px; margin-top: auto; display: flex; align-items: center; gap: 5px; padding-left: 8px; border-top: 1px solid #2d2d2f; }

.viewport { position: relative; flex: 1; min-width: 0; overflow: hidden; background: #c9c9d1; }
.scene { position: absolute; inset: 0; width: 100%; height: 100%; stroke: none; }
.axis { fill: #f3f3f3; font: 6px Inter, sans-serif; }
.axis path { fill: none; stroke: #dcdcdc; stroke-width: 1; }
.tools { position: absolute; top: 6px; left: 50%; transform: translateX(-50%); height: 24px; display: flex; align-items: center; gap: 6px; padding: 0 6px 0 5px; border-radius: 6px; background: #17171a; }
.tools button { width: 16px; height: 16px; border-radius: 3px; }
.tools i { width: 12px; height: 6px; background: linear-gradient(#333, #333) no-repeat 50% 0 / 1px 100%; }
.tools .short { width: 6px; background-position: 100% 0; }
.tools .import { width: 28px; margin-right: 2px; background: #27272a; }
.tools .on, .stack .on { background: var(--accent); color: #fff; }
.modes { position: absolute; top: 9px; right: 8px; display: flex; gap: 3px; color: #eee; }
.modes button { height: 19px; gap: 4px; padding: 0 5px; border-radius: 5px; background: #17171a; font-weight: 500; box-shadow: 0 6px 12px #0003; }
.modes svg:last-child { width: 8px; height: 8px; color: #aaa; }
.modes button:last-child { gap: 5px; }
.stack { position: absolute; top: 83px; right: 8px; display: grid; gap: 3px; }
.stack button { width: 20px; height: 19px; border-radius: 4px; background: #17171a; color: #ddd; }

.rail { flex: none; width: 22px; background: #18181a; border-right: 1px solid #29292b; }
.rail button { width: 100%; height: 22px; padding-right: 2px; color: #aeaeb4; border-left: 2px solid transparent; }
.rail .on { border-color: var(--accent); background: #232325; color: #eee; }
.rail .on svg { width: 12px; }

.props { position: relative; flex: none; width: 271px; background: #222223; border-right: 1px solid #2b2b2d; }
.props h2 { height: 28px; display: flex; align-items: center; gap: 4px; padding: 0 9px; font-size: 9px; font-weight: 500; color: #e4e4e6; }
.props h2 svg { width: 12px; }
.sec { height: 34px; display: flex; align-items: center; gap: 5px; padding: 0 10px 0 9px; border-top: 1px solid #303032; }
.props > .sec { padding-bottom: 2px; }
.sec h3 { flex: 1; font-weight: 500; color: #e4e4e6; }
.sec button svg { width: 11px; height: 11px; }
.open-sec { background: #1d1d1e; border: solid #303032; border-width: 1px 0; padding-bottom: 5px; }
.open-sec .sec { border: 0; height: 29px; }
.pager { height: 20px; display: flex; align-items: center; gap: 8px; padding: 0 7px 0 9px; color: #eee; font-weight: 500; }
.pager span { flex: 1; }
.pager button { width: 14px; height: 14px; border-radius: 50%; background: #29292b; }
.pager svg { width: 8px; height: 8px; }
.row { display: grid; grid-template-columns: 74px 1fr; align-items: center; padding: 0 8px 0 9px; }
.open-sec > .row { height: 30px; }
.target { margin-left: 11px; padding: 0 8px 0 8px; border-left: 1px solid #333335; height: 39px; }
.trow { height: 11px; display: flex; align-items: center; justify-content: space-between; }
.trow button { color: #6d5ff0; }
.target > input { width: calc(100% - 63px); height: 19px; margin: 5px 0 0 63px; padding: 0 8px; border-radius: 2px; background: var(--field); display: block; }
.rows { height: 198px; display: grid; grid-auto-rows: 1fr; }
.f { height: 20px; min-width: 0; display: flex; align-items: center; gap: 3px; padding: 0 6px; border: 1px solid #303032; border-radius: 3px; background: #242425; color: #77777c; }
.f input { flex: 1; width: 0; color: #eee; font-weight: 500; }
.xyz { display: grid; grid-template-columns: 1fr 1fr 1fr; gap: 6px; }
.slide { display: grid; grid-template-columns: 1fr 56px; gap: 5px; align-items: center; }
input[type=checkbox] { appearance: none; width: 10px; height: 10px; border: 1px solid #3c3c3f; border-radius: 1px; background: #242425; }
input[type=checkbox]:checked { border-color: var(--accent); background: var(--accent); display: grid; place-items: center; }
input[type=checkbox]:checked::after { content: ""; width: 5px; height: 3px; border: solid #fff; border-width: 0 0 1px 1px; transform: rotate(-45deg); }
input[type=range] { appearance: none; width: 100%; height: 10px; }
input[type=range]::-webkit-slider-runnable-track { height: 2px; background: linear-gradient(90deg, #5f52d8 var(--v), #39393b var(--v)); }
input[type=range]::-webkit-slider-thumb { appearance: none; width: 8px; height: 8px; margin-top: -3px; border: 1px solid var(--accent); border-radius: 50%; background: #fff; }
.pick { position: relative; }
.pick select { appearance: none; width: 100%; height: 19px; padding: 0 5px; border: 1px solid #303032; border-radius: 3px; background: #242425; color: #eee; font-weight: 500; }
.pick svg { position: absolute; right: 5px; top: 6px; width: 8px; height: 8px; pointer-events: none; }
.color { display: grid; grid-template-columns: 19px 1fr 58px; gap: 5px; }
.swatch { padding: 0; justify-content: center; }
.swatch i { width: 9px; height: 9px; background: repeating-conic-gradient(#b9dcfb 0 25%, #8fb2d6 0 50%) 0 0 / 6px 6px; }
.pointer { position: absolute; left: 190px; top: 130px; width: 64px; height: 64px; border: 1px solid #dbd62b; border-radius: 50%; box-shadow: inset 0 0 0 8px #aaa52b80; pointer-events: none; }
.pointer svg { position: absolute; left: 35px; top: 30px; width: 9px; height: 13px; fill: #111; stroke: #ddd; }
```
